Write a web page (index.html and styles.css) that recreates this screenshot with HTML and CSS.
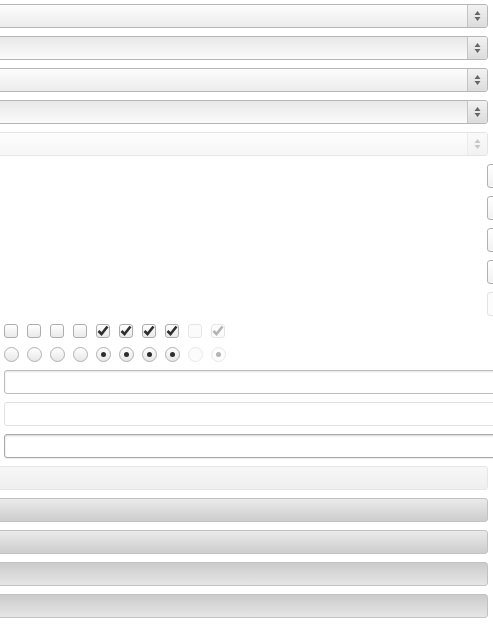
FILE: index.html
```html
<!DOCTYPE html>
<html>
<head>
<meta charset="utf-8">
<link rel="stylesheet" href="styles.css">
</head>
<body>
<div class="page">
  <div class="wide select"><span class="arrows"><svg width="7" height="12" viewBox="0 0 7 12"><path d="M3.5 1 L6.5 5 L0.5 5 Z M0.5 7 L6.5 7 L3.5 11 Z"/></svg></span></div>
  <div class="wide select active"><span class="arrows"><svg width="7" height="12" viewBox="0 0 7 12"><path d="M3.5 1 L6.5 5 L0.5 5 Z M0.5 7 L6.5 7 L3.5 11 Z"/></svg></span></div>
  <div class="wide select"><span class="arrows"><svg width="7" height="12" viewBox="0 0 7 12"><path d="M3.5 1 L6.5 5 L0.5 5 Z M0.5 7 L6.5 7 L3.5 11 Z"/></svg></span></div>
  <div class="wide select active"><span class="arrows"><svg width="7" height="12" viewBox="0 0 7 12"><path d="M3.5 1 L6.5 5 L0.5 5 Z M0.5 7 L6.5 7 L3.5 11 Z"/></svg></span></div>
  <div class="wide select disabled"><span class="arrows"><svg width="7" height="12" viewBox="0 0 7 12"><path d="M3.5 1 L6.5 5 L0.5 5 Z M0.5 7 L6.5 7 L3.5 11 Z"/></svg></span></div>

  <div class="mini-btn"></div>
  <div class="mini-btn"></div>
  <div class="mini-btn"></div>
  <div class="mini-btn"></div>
  <div class="mini-btn disabled"></div>

  <div class="toggle-row">
    <span class="check"></span>
    <span class="check"></span>
    <span class="check"></span>
    <span class="check"></span>
    <span class="check"><svg width="14" height="14" viewBox="0 0 14 14"><path d="M2.5 7 L5.5 10 L11.5 2.5"/></svg></span>
    <span class="check"><svg width="14" height="14" viewBox="0 0 14 14"><path d="M2.5 7 L5.5 10 L11.5 2.5"/></svg></span>
    <span class="check"><svg width="14" height="14" viewBox="0 0 14 14"><path d="M2.5 7 L5.5 10 L11.5 2.5"/></svg></span>
    <span class="check"><svg width="14" height="14" viewBox="0 0 14 14"><path d="M2.5 7 L5.5 10 L11.5 2.5"/></svg></span>
    <span class="check disabled"></span>
    <span class="check disabled"><svg width="14" height="14" viewBox="0 0 14 14"><path d="M2.5 7 L5.5 10 L11.5 2.5"/></svg></span>
  </div>
  <div class="toggle-row radios">
    <span class="radio"></span>
    <span class="radio"></span>
    <span class="radio"></span>
    <span class="radio"></span>
    <span class="radio on"></span>
    <span class="radio on"></span>
    <span class="radio on"></span>
    <span class="radio on"></span>
    <span class="radio disabled"></span>
    <span class="radio disabled on"></span>
  </div>

  <div class="text-input"></div>
  <div class="text-input disabled"></div>
  <div class="text-input focus"></div>

  <div class="wide button disabled"></div>
  <div class="wide button"></div>
  <div class="wide button"></div>
  <div class="wide button active"></div>
  <div class="wide button active"></div>
</div>
</body>
</html>
```
FILE: styles.css
```css
html, body {
  margin: 0;
  padding: 0;
  overflow: hidden;
  background: #ffffff;
  font-family: "Liberation Sans", Arial, sans-serif;
}

.page {
  display: flex;
  flex-direction: column;
  gap: 8px;
  padding-top: 4px;
  width: 493px;
  overflow: hidden;
}

.wide {
  box-sizing: border-box;
  height: 24px;
  margin-left: -10px;
  width: 498px;
  flex-shrink: 0;
  border: 1px solid #b6b6b6;
  border-radius: 3px;
}

.select {
  display: flex;
  justify-content: flex-end;
  background: linear-gradient(#fdfdfd, #ececec);
}

.select.active {
  background: linear-gradient(#e8e8e8, #fbfbfb);
}

.select.disabled {
  border-color: #e4e4e4;
  background: linear-gradient(#fdfdfd, #f6f6f6);
}

.arrows {
  box-sizing: border-box;
  width: 20px;
  border-left: 1px solid #c4c4c4;
  background: linear-gradient(#f2f2f2, #dcdcdc);
  display: flex;
  align-items: center;
  justify-content: center;
  border-radius: 0 2px 2px 0;
}

.arrows svg path {
  fill: #666666;
}

.select.disabled .arrows {
  border-left-color: #ececec;
  background: linear-gradient(#fafafa, #f2f2f2);
}

.select.disabled .arrows svg path {
  fill: #c6c6c6;
}

.mini-btn {
  box-sizing: border-box;
  height: 24px;
  width: 30px;
  flex-shrink: 0;
  margin-left: 487px;
  border: 1px solid #b2b2b2;
  border-radius: 3px;
  background: linear-gradient(#ffffff, #f1f1f1);
}

.mini-btn.disabled {
  border-color: #e2e2e2;
  background: #fcfcfc;
}

.toggle-row {
  display: flex;
  gap: 9px;
  height: 15px;
  padding-left: 4px;
}

.toggle-row.radios {
  gap: 8px;
}

.check {
  box-sizing: border-box;
  width: 14px;
  height: 14px;
  border: 1px solid #adadad;
  border-radius: 3px;
  background: linear-gradient(#ffffff, #e9e9e9);
  position: relative;
}

.check svg {
  position: absolute;
  left: -1px;
  top: -1px;
}

.check svg path {
  fill: none;
  stroke: #2e2e2e;
  stroke-width: 2.6;
  stroke-linecap: butt;
  stroke-linejoin: miter;
}

.check.disabled {
  border-color: #e6e6e6;
  background: #fbfbfb;
}

.check.disabled svg path {
  stroke: #b4b4b4;
}

.radio {
  box-sizing: border-box;
  width: 15px;
  height: 15px;
  border: 1px solid #b0b0b0;
  border-radius: 50%;
  background: linear-gradient(#ffffff, #e7e7e7);
  display: flex;
  align-items: center;
  justify-content: center;
}

.radio.on::after {
  content: "";
  width: 5px;
  height: 5px;
  border-radius: 50%;
  background: #2e2e2e;
}

.radio.disabled {
  border-color: #e8e8e8;
  background: #fcfcfc;
}

.radio.disabled.on::after {
  background: #b4b4b4;
}

.text-input {
  box-sizing: border-box;
  height: 24px;
  margin-left: 4px;
  width: 520px;
  flex-shrink: 0;
  border: 1px solid #bdbdbd;
  border-radius: 3px;
  background: #ffffff;
  box-shadow: inset 0 1px 2px rgba(0, 0, 0, 0.12);
}

.text-input.disabled {
  border-color: #e2e2e2;
  box-shadow: none;
}

.text-input.focus {
  border-color: #a9a9a9;
  box-shadow: inset 0 1px 2px rgba(0, 0, 0, 0.18), 0 1px 1px rgba(0, 0, 0, 0.08);
}

.button {
  border-color: #c2c2c2;
  background: linear-gradient(#eaeaea, #cdcdcd);
}

.button.disabled {
  border-color: #e6e6e6;
  background: linear-gradient(#f7f7f7, #efefef);
}

.button.active {
  background: linear-gradient(#cbcbcb, #e6e6e6);
}
```
